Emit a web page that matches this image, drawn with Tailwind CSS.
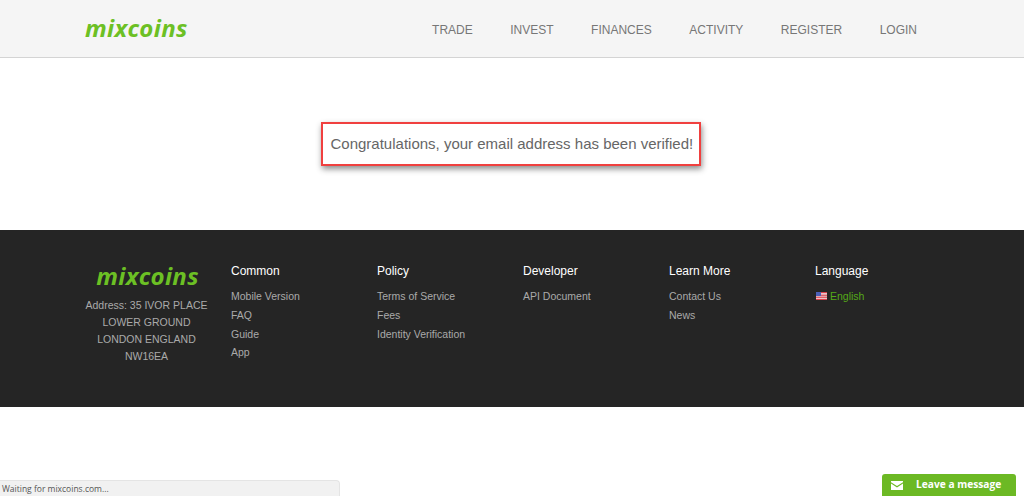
<!DOCTYPE html>
<html lang="en">
<head>
    <meta charset="UTF-8">
    <title>mixcoins</title>
    <script src="https://cdn.jsdelivr.net/npm/@tailwindcss/browser@4"></script>
</head>
<body class="relative h-[496px] overflow-hidden bg-white font-['Liberation_Sans',Arial,sans-serif]">
    <header class="h-[58px] bg-[#f5f5f5] border-b border-[#d4d4d4] flex items-center pl-[85px]">
        <a class="font-['Open_Sans',sans-serif] font-bold italic text-[24px] leading-none text-[#6cc024] tracking-[0.3px] -mt-[2px]">mixcoins</a>
        <nav class="ml-auto mr-[107px] flex gap-[37.5px] text-[12px] text-[#777777] mt-[3px]">
            <a>TRADE</a>
            <a>INVEST</a>
            <a>FINANCES</a>
            <a>ACTIVITY</a>
            <a>REGISTER</a>
            <a>LOGIN</a>
        </nav>
    </header>

    <main class="h-[172px] flex justify-center pt-[64px] pr-[3px]">
        <div class="w-[380px] h-[44px] pl-[8px] border-2 border-[#f0403f] shadow-[1px_3px_6px_rgba(0,0,0,0.45)] flex items-center whitespace-nowrap text-[15px] text-[#666666]">
            Congratulations, your email address has been verified!
        </div>
    </main>

    <footer class="h-[177px] bg-[#252525] flex pl-[85px] pt-[34px] text-[10.5px] text-[#aaaaaa]">
        <div class="w-[146px] flex flex-col items-center pr-[23px]">
            <a class="font-['Open_Sans',sans-serif] font-bold italic text-[24px] leading-none text-[#6cc024] tracking-[0.3px] pl-[2px]">mixcoins</a>
            <p class="mt-[9px] text-center leading-[17px] whitespace-nowrap">Address: 35 IVOR PLACE<br>LOWER GROUND<br>LONDON ENGLAND<br>NW16EA</p>
        </div>
        <div class="w-[146px]">
            <h4 class="text-[12px] leading-[15px] text-white mb-[8px]">Common</h4>
            <ul class="leading-[18.8px]">
                <li>Mobile Version</li>
                <li>FAQ</li>
                <li>Guide</li>
                <li>App</li>
            </ul>
        </div>
        <div class="w-[146px]">
            <h4 class="text-[12px] leading-[15px] text-white mb-[8px]">Policy</h4>
            <ul class="leading-[18.8px]">
                <li>Terms of Service</li>
                <li>Fees</li>
                <li>Identity Verification</li>
            </ul>
        </div>
        <div class="w-[146px]">
            <h4 class="text-[12px] leading-[15px] text-white mb-[8px]">Developer</h4>
            <ul class="leading-[18.8px]">
                <li>API Document</li>
            </ul>
        </div>
        <div class="w-[146px]">
            <h4 class="text-[12px] leading-[15px] text-white mb-[8px]">Learn More</h4>
            <ul class="leading-[18.8px]">
                <li>Contact Us</li>
                <li>News</li>
            </ul>
        </div>
        <div>
            <h4 class="text-[12px] leading-[15px] text-white mb-[8px]">Language</h4>
            <div class="flex items-center gap-[3px] pl-[1px] leading-[18.8px] text-[#55aa18]">
                <svg width="11" height="8" viewBox="0 0 11 8">
                    <rect width="11" height="8" fill="#f0e4e8"/>
                    <rect width="11" height="1.2" fill="#d8404c"/>
                    <rect y="2.6" width="11" height="1.2" fill="#d8404c"/>
                    <rect y="4.6" width="11" height="1.2" fill="#d8404c"/>
                    <rect y="6.8" width="11" height="1.2" fill="#d8404c"/>
                    <rect width="5" height="4" fill="#4a5fb8"/>
                </svg>
                <span>English</span>
            </div>
        </div>
    </footer>

    <!-- browser status bubble -->
    <div class="absolute left-0 bottom-0 w-[340px] h-[16px] bg-[#f1f1f1] rounded-tr-[4px] border-t border-r border-[#e4e4e4] pl-[2px] font-['Open_Sans',sans-serif] text-[8.5px] leading-[16px] text-[#555555]">Waiting for mixcoins.com...</div>

    <!-- chat widget -->
    <div class="absolute right-[8px] bottom-0 w-[134px] h-[22px] bg-[#6cb924] rounded-t-[3px] flex items-center">
        <div class="w-[29px] flex justify-center">
            <svg width="12" height="9" viewBox="0 0 12 9">
                <path d="M0 0h12v1.2L6 5 0 1.2z" fill="#ffffff"/>
                <path d="M0 2.6 6 6.4l6-3.8V9H0z" fill="#ffffff"/>
            </svg>
        </div>
        <span class="ml-[5px] font-['Open_Sans',sans-serif] font-bold text-[10.2px] text-white">Leave a message</span>
    </div>
</body>
</html>
